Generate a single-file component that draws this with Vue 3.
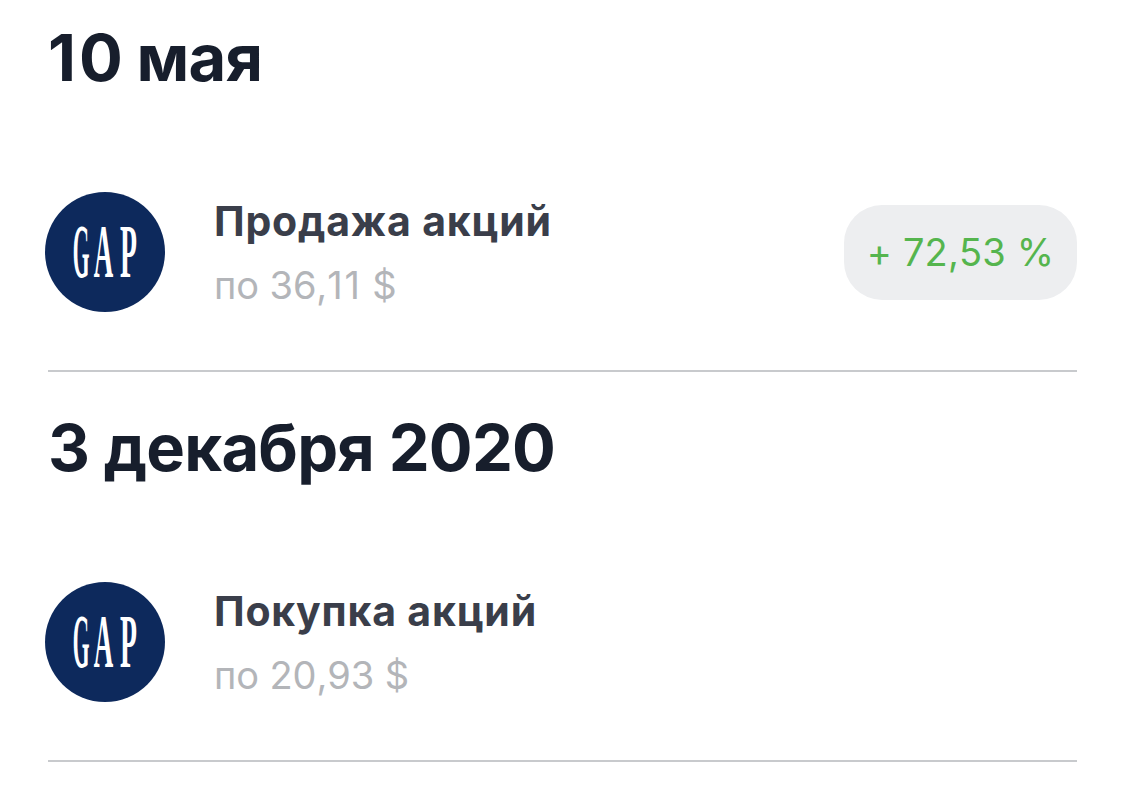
<script setup>
import {ref} from "vue";

const days = ref([
    {id: 1, date: '10 мая', name: 'Продажа акций', price: 'по 36,11 $', profit: '+ 72,53 %'},
    {id: 2, date: '3 декабря 2020', name: 'Покупка акций', price: 'по 20,93 $', profit: ''},
]);

// the digit 1 is too narrow in this font, it gets its own spacing
function parts(text) {
    return text.split(/(1)/).filter(part => part !== '');
}
</script>

<template>
    <div class="history">
        <section class="day" v-for="day in days" :key="day.id">
            <h2><span v-for="(part, i) in parts(day.date)" :key="i" :class="{one: part === '1'}">{{ part }}</span></h2>
            <div class="deal">
                <svg class="logo" viewBox="0 0 120 120">
                    <circle cx="60" cy="60" r="60"/>
                    <g class="brand">
                        <text transform="translate(27.7 85) scale(.28 1)">G</text>
                        <text transform="translate(48.8 85) scale(.35 1)">A</text>
                        <text transform="translate(75 85) scale(.36 1)">P</text>
                    </g>
                </svg>
                <div class="info">
                    <div class="name">{{ day.name }}</div>
                    <div class="price"><span v-for="(part, i) in parts(day.price)" :key="i" :class="{one: part === '1'}">{{ part }}</span></div>
                </div>
                <div class="profit" v-if="day.profit">{{ day.profit }}</div>
            </div>
        </section>
    </div>
</template>

<style>
body {
    background: #fff;
}
</style>

<style scoped>

.history {
    height: 797px;
    padding: 0 48px;
    box-sizing: border-box;
    overflow: hidden;
    font-family: Inter, "Noto Sans", sans-serif;
    font-kerning: none;
}

.day {
    height: 372px;
    margin-bottom: 18px;
    border-bottom: 2px solid #c8cacd;
    box-sizing: border-box;
}

h2 {
    margin: 0;
    padding-top: 18px;
    height: 192px;
    box-sizing: border-box;
    font-size: 65px;
    line-height: 80px;
    letter-spacing: -0.8px;
    font-weight: 700;
    color: #171e2c;
}

.one {
    letter-spacing: 0.045em;
}

.deal {
    display: flex;
    align-items: center;
    height: 120px;
    margin-left: -3px;
}

.logo {
    width: 120px;
    height: 120px;
    flex: none;
}

.logo circle {
    fill: #0d295c;
}

.brand {
    fill: #fff;
    font-family: "Liberation Serif", serif;
    font-size: 77px;
    font-weight: 700;
}

.info {
    flex: 1;
    margin-left: 49px;
    padding-top: 2px;
    white-space: nowrap;
}

.name {
    font-size: 41px;
    line-height: 64px;
    letter-spacing: 0.8px;
    font-weight: 700;
    color: #3a3e4a;
}

.price {
    font-size: 38px;
    line-height: 64px;
    letter-spacing: -0.1px;
    color: #b3b5b9;
}

.profit {
    width: 233px;
    height: 95px;
    border-radius: 38px;
    background: #edeef0;
    color: #55b54e;
    font-size: 38px;
    line-height: 95px;
    letter-spacing: 0.15px;
    text-align: center;
    white-space: nowrap;
}
</style>
